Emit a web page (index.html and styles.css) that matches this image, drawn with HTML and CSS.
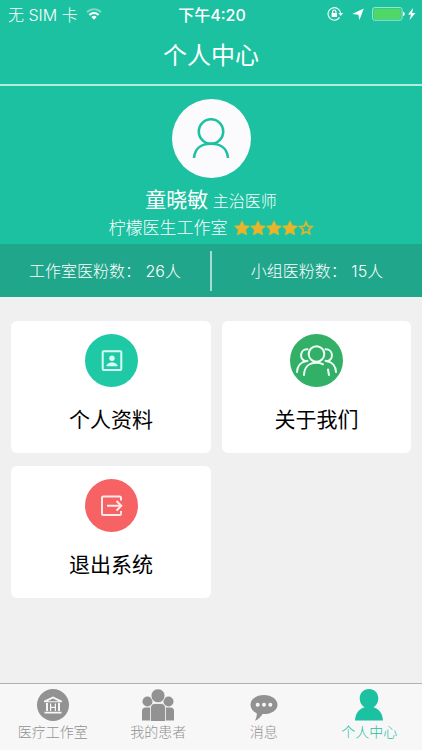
FILE: index.html
```html
<!DOCTYPE html>
<html lang="zh-CN">
<head>
<meta charset="utf-8">
<meta name="viewport" content="width=device-width, initial-scale=1">
<title>个人中心</title>
<link rel="stylesheet" href="styles.css">
</head>
<body>
<header class="top">
  <div class="status">
    <div class="status-left">
      <span>无 SIM 卡</span>
      <svg width="16" height="12" viewBox="0 0 16 12" fill="none" stroke="#fff" stroke-width="2">
        <path d="M1 4.2a10 10 0 0 1 14 0" opacity=".4"/>
        <path d="M3.4 7a6.5 6.5 0 0 1 9.2 0"/>
        <path d="M5.3 9a4 4 0 0 1 5.4 0L8 11.8z" fill="#fff" stroke="none"/>
      </svg>
    </div>
    <div class="status-time">下午4:20</div>
    <div class="status-right">
      <svg width="17" height="16" viewBox="0 0 17 16" fill="none" stroke="#fff" stroke-width="1.1">
        <path d="M12.6 11.4A6.3 6.3 0 1 1 13.6 7.2"/>
        <path d="M11.3 7h4.8l-2.4 3z" fill="#fff" stroke="none"/>
        <rect x="4.6" y="7" width="5.4" height="4" fill="#fff" stroke="none"/>
        <path d="M5.7 7V5.6a1.6 1.6 0 0 1 3.2 0V7"/>
      </svg>
      <svg width="12" height="13" viewBox="0 0 12 13" fill="#fff"><path d="M11.8.5 7.4 12.3 6.4 6.7.2 6.1z"/></svg>
      <svg width="44" height="14" viewBox="0 0 44 14">
        <rect x=".6" y=".6" width="29.5" height="12.6" rx="2" fill="none" stroke="#a9e8c9" stroke-width="1"/>
        <rect x="1.8" y="1.8" width="27" height="10.2" rx="1" fill="#4fd964"/>
        <path d="M31 4.8c2.3.3 2.3 4 0 4.3z" fill="#fff"/>
        <path d="M41 1l-5 6.5h3L37.5 13l6-7h-3.3z" fill="#fff"/>
      </svg>
    </div>
  </div>
  <h1 class="title">个人中心</h1>
</header>

<section class="profile">
  <div class="avatar">
    <svg width="40" height="44" viewBox="0 0 40 44" fill="none" stroke="#1bc1a0" stroke-width="2.6">
      <circle cx="20" cy="14.5" r="12.2"/>
      <path d="M3 41c.7-9 7-14.300 17-14.300s16.300 5.300 17 14.300"/>
    </svg>
  </div>
  <div class="person"><span class="name">童晓敏</span> <span class="job">主治医师</span></div>
  <div class="studio">
    <span>柠檬医生工作室</span>
    <svg width="80" height="16" viewBox="0 0 80 16" role="img" aria-label="4 / 5">
      <defs><path id="star" d="M8 .8l2.200 4.800 5.200.6-3.800 3.500 1 5.200L8 12.400l-4.600 2.500 1-5.200L.6 6.200l5.200-.6z"/></defs>
      <g fill="#e9b42a" stroke="#e9b42a" stroke-width=".7" stroke-linejoin="round">
        <use href="#star"/><use href="#star" x="16"/><use href="#star" x="32"/><use href="#star" x="48"/>
      </g>
      <path d="M72 2.200l1.700 3.900 4.300.5-3.200 2.900.9 4.300L72 11.700l-3.700 2.100.9-4.300L66 6.600l4.300-.5z" fill="none" stroke="#d8b534" stroke-width="1.800"/>
    </svg>
  </div>
</section>

<section class="stats">
  <div class="stat">工作室医粉数： 26人</div>
  <div class="stat">小组医粉数： 15人</div>
</section>

<main class="cards">
  <a class="card" href="#profile">
    <svg class="card-icon" viewBox="0 0 53 53">
      <circle cx="26.500" cy="26.500" r="26.500" fill="#20c9a6"/>
      <rect x="17.700" y="17.300" width="18.600" height="18.600" rx="1" fill="none" stroke="#d9fff5" stroke-width="2"/>
      <circle cx="27" cy="24.200" r="2.700" fill="#d9fff5"/>
      <path d="M21.500 32.300c.2-5 10.800-5 11 0z" fill="#d9fff5"/>
    </svg>
    <span>个人资料</span>
  </a>
  <a class="card" href="#about">
    <svg class="card-icon" viewBox="0 0 53 53" fill="none" stroke="#effff5" stroke-width="2" stroke-linecap="round">
      <circle cx="26.500" cy="26.500" r="26.500" fill="#33b067" stroke="none"/>
      <circle cx="26.500" cy="20" r="7.800"/>
      <path d="M14 41c.2-8 5-12.200 12.500-12.200 2.500 0 4.700.3 6.500 1.500M38 35.500l1 5.500"/>
      <path d="M17.500 15.300c-7.500-.5-9 10.200-1.500 12-5 .8-8.700 4.700-9 10.700M16 27.300l1.500-.5"/>
      <path d="M35.500 15.300c7.500-.5 9 10.200 1.500 12 5 .8 8.700 4.700 9 10.700M37 27.300l-1.500-.5"/>
    </svg>
    <span>关于我们</span>
  </a>
  <a class="card" href="#logout">
    <svg class="card-icon" viewBox="0 0 53 53" fill="none" stroke="#ffe9e9" stroke-width="2">
      <circle cx="26.500" cy="26.500" r="26.500" fill="#f76265" stroke="none"/>
      <path d="M36 21.500V19q0-1.500-1.500-1.500H18.500q-1.500 0-1.500 1.500v15.500q0 1.500 1.500 1.500h16q1.500 0 1.500-1.500V32"/>
      <path d="M22 26.800h14M31.500 22l4.800 4.800-4.800 4.800"/>
    </svg>
    <span>退出系统</span>
  </a>
</main>

<nav class="tabs">
  <a class="tab" href="#studio">
    <svg width="32" height="32" viewBox="0 0 32 32">
      <circle cx="16" cy="16" r="16" fill="#929292"/>
      <g fill="#f7f7f7">
        <path fill-rule="evenodd" d="M16 7.500l9 4.300v1.400H7v-1.400zM16 9.600l-5.500 2.600h11z"/>
        <path d="M9 14h2v8H9zM21 14h2v8h-2zM13 14.500h1.200v3.200h3.600v-3.200H19v7.500h-1.200v-3h-3.600v3H13zM7.500 22.700h17v1.700h-17z"/>
      </g>
    </svg>
    <span>医疗工作室</span>
  </a>
  <a class="tab" href="#patients">
    <svg width="32" height="32" viewBox="0 0 32 32" fill="#929292">
      <circle cx="5.500" cy="12.500" r="5"/><circle cx="26.500" cy="12.500" r="5"/>
      <path d="M0 31.500V22q0-3.500 3.500-3.500h25q3.500 0 3.500 3.500v9.500z"/>
      <path d="M8.500 32V19q0-4.500 4.500-4.500h6q4.500 0 4.500 4.500v13" stroke="#f7f7f7" stroke-width=".8"/>
      <circle cx="16" cy="6.800" r="7" stroke="#f7f7f7" stroke-width=".8"/>
    </svg>
    <span>我的患者</span>
  </a>
  <a class="tab" href="#messages">
    <svg width="32" height="32" viewBox="0 0 32 32">
      <path d="M16 6C8.500 6 2.500 10.300 2.500 15.700c0 3.900 2.700 7 6.200 8.500.3 2.500-.4 5-1.700 7.500 3.500-1.500 6.200-3.800 7.500-6.700 8.400.5 15-3.500 15-9.300C29.500 10.300 23.500 6 16 6z" fill="#929292"/>
      <g fill="#f7f7f7"><circle cx="9.700" cy="15.800" r="2"/><circle cx="16" cy="15.800" r="2"/><circle cx="22.300" cy="15.800" r="2"/></g>
    </svg>
    <span>消息</span>
  </a>
  <a class="tab active" href="#me">
    <svg width="32" height="32" viewBox="0 0 32 32" fill="#1bc1a0">
      <path d="M16 0c5.500 0 9.300 4 9.300 9.500 0 4-2 7-4.800 8.800 5.500 1.500 9 6 9.500 13.200H2c.5-7.200 4-11.700 9.500-13.200-2.800-1.800-4.800-4.800-4.800-8.800C6.700 4 10.500 0 16 0z"/>
    </svg>
    <span>个人中心</span>
  </a>
</nav>
</body>
</html>
```
FILE: styles.css
```css
* { box-sizing: border-box; }

body {
  margin: 0;
  min-height: 100vh;
  display: flex;
  flex-direction: column;
  background: #f0f0f0;
  color: #000;
  font-family: "Inter", "Noto Sans CJK SC", sans-serif;
  font-weight: 400;
}

svg { display: block; flex: none; }
a { color: inherit; text-decoration: none; }

.top {
  background: #1bc1a0;
  color: #fff;
  border-bottom: 2px solid #b4ebdd;
}

.status {
  display: grid;
  grid-template-columns: 1fr auto 1fr;
  align-items: center;
  height: 28px;
  padding: 0 6px 0 8px;
  font-size: 16px;
  font-weight: 300;
}
.status-left { display: flex; align-items: center; gap: 8px; }
.status-time { font-weight: 500; }
.status-right { display: flex; align-items: center; justify-content: flex-end; gap: 8px; }

.title {
  margin: 0;
  height: 56px;
  font-size: 24px;
  line-height: 56px;
  font-weight: 400;
  text-align: center;
}

.profile {
  display: flex;
  flex-direction: column;
  align-items: center;
  padding: 13px 0 3px;
  background: #1bc1a0;
  color: #fff;
}
.avatar {
  display: grid;
  place-items: center;
  width: 79px;
  height: 79px;
  margin-bottom: 8px;
  border-radius: 50%;
  background: #fbfbfd;
}
.person { line-height: 28px; }
.name { font-size: 21px; }
.job { font-size: 16px; font-weight: 300; }
.studio {
  display: flex;
  align-items: center;
  gap: 6px;
  font-size: 17px;
  line-height: 26px;
  font-weight: 300;
}

.stats {
  display: flex;
  align-items: center;
  height: 53px;
  background: #1fa68b;
  color: #fff;
  font-size: 16px;
  font-weight: 300;
}
.stat {
  flex: 1;
  line-height: 40px;
  text-align: center;
}
.stat + .stat { border-left: 2px solid #a5dbd0; }

.cards {
  flex: 1;
  display: grid;
  grid-template-columns: 200fr 189fr;
  align-content: start;
  gap: 13px 11px;
  padding: 24px 11px;
}
.card {
  display: flex;
  flex-direction: column;
  align-items: center;
  gap: 16px;
  padding: 13px 0 17px;
  border-radius: 6px;
  background: #fff;
  font-size: 21px;
  line-height: 33px;
}
.card-icon { width: 53px; height: 53px; }

.tabs {
  display: grid;
  grid-template-columns: repeat(4, 1fr);
  height: 67px;
  padding-top: 5px;
  border-top: 1px solid #b2b2b2;
  background: #f7f7f7;
  color: #929292;
}
.tab {
  display: flex;
  flex-direction: column;
  align-items: center;
  font-size: 14px;
  line-height: 22px;
  font-weight: 300;
}
.active { color: #1bc1a0; }
```
